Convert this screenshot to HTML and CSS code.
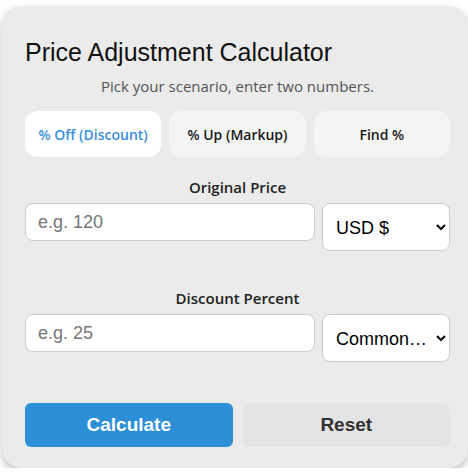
FILE: index.html
```html
<!DOCTYPE html>
<html lang="en">
<head>
  <meta charset="UTF-8" />
  <meta name="viewport" content="width=device-width, initial-scale=1.0"/>
  <title>Price Adjustment Calculator</title>
  <link rel="stylesheet" href="styles.css">
</head>
<body>

  <div class="card">
    <h2>Price Adjustment Calculator</h2>
    <p class="hint">Pick your scenario, enter two numbers.</p>

    <div class="tabs">
      <button class="tab active">% Off (Discount)</button>
      <button class="tab">% Up (Markup)</button>
      <button class="tab">Find %</button>
    </div>

    <div class="field">
      <label for="priceInput">Original Price</label>
      <div class="row">
        <input type="number" id="priceInput" placeholder="e.g. 120">
        <select id="currency">
          <option>USD $</option>
          <option>EUR €</option>
          <option>GBP £</option>
        </select>
      </div>
    </div>

    <div class="field">
      <label for="pctInput">Discount Percent</label>
      <div class="row">
        <input type="number" id="pctInput" placeholder="e.g. 25">
        <select id="common">
          <option>Common…</option>
          <option>10%</option>
          <option>25%</option>
          <option>50%</option>
        </select>
      </div>
    </div>

    <div class="actions">
      <button class="btn calc">Calculate</button>
      <button class="btn reset">Reset</button>
    </div>
  </div>

</body>
</html>
```

FILE: styles.css
```css
* {
  margin: 0;
  padding: 0;
  box-sizing: border-box;
}

body {
  background: #fff;
  font-family: 'Open Sans', 'Noto Sans', sans-serif;
}

.card {
  width: 466px;
  margin: 6px 0 0 2px;
  padding: 32px 18px 21px 23px;
  background: #eaebea;
  border-radius: 20px;
  box-shadow: 0 4px 8px rgba(0, 0, 0, 0.25);
}

h2 {
  font-family: 'Liberation Sans', Arial, sans-serif;
  font-weight: normal;
  font-size: 25px;
  line-height: 28px;
  color: #111;
}

.hint {
  margin-top: 10px;
  text-align: center;
  font-size: 15px;
  line-height: 20px;
  color: #555;
}

.tabs {
  display: flex;
  gap: 8px;
  margin-top: 15px;
}

.tab {
  flex: 1;
  height: 46px;
  border: none;
  border-radius: 12px;
  background: #f3f4f4;
  font-family: 'Open Sans', 'Noto Sans', sans-serif;
  font-size: 14px;
  font-weight: 600;
  color: #1a1a1a;
}

.tab.active {
  background: #fff;
  color: #3a8fd9;
}

.field {
  margin-top: 20px;
}

.field + .field {
  margin-top: 37px;
}

.field label {
  display: block;
  text-align: center;
  font-size: 15px;
  line-height: 20px;
  font-weight: 600;
  color: #222;
  margin-bottom: 6px;
}

.row {
  display: flex;
  gap: 7px;
  align-items: flex-start;
}

input, select {
  font-family: 'Liberation Sans', Arial, sans-serif;
  font-size: 18px;
  border: 1px solid #ccc;
  border-radius: 8px;
  background: #fff;
  outline: none;
}

input {
  flex: 1;
  height: 38px;
  padding: 0 12px;
  color: #222;
}

input::placeholder {
  color: #777;
}

select {
  width: 128px;
  height: 48px;
  padding: 2px 4px 0 9px;
  color: #000;
}

.actions {
  display: flex;
  gap: 10px;
  margin-top: 41px;
}

.btn {
  flex: 1;
  height: 44px;
  border: none;
  border-radius: 6px;
  font-family: 'Liberation Sans', Arial, sans-serif;
  font-size: 19px;
  font-weight: bold;
  cursor: pointer;
}

.calc {
  background: #2d8fd5;
  color: #fff;
}

.reset {
  background: #e3e4e6;
  color: #333;
}
```
